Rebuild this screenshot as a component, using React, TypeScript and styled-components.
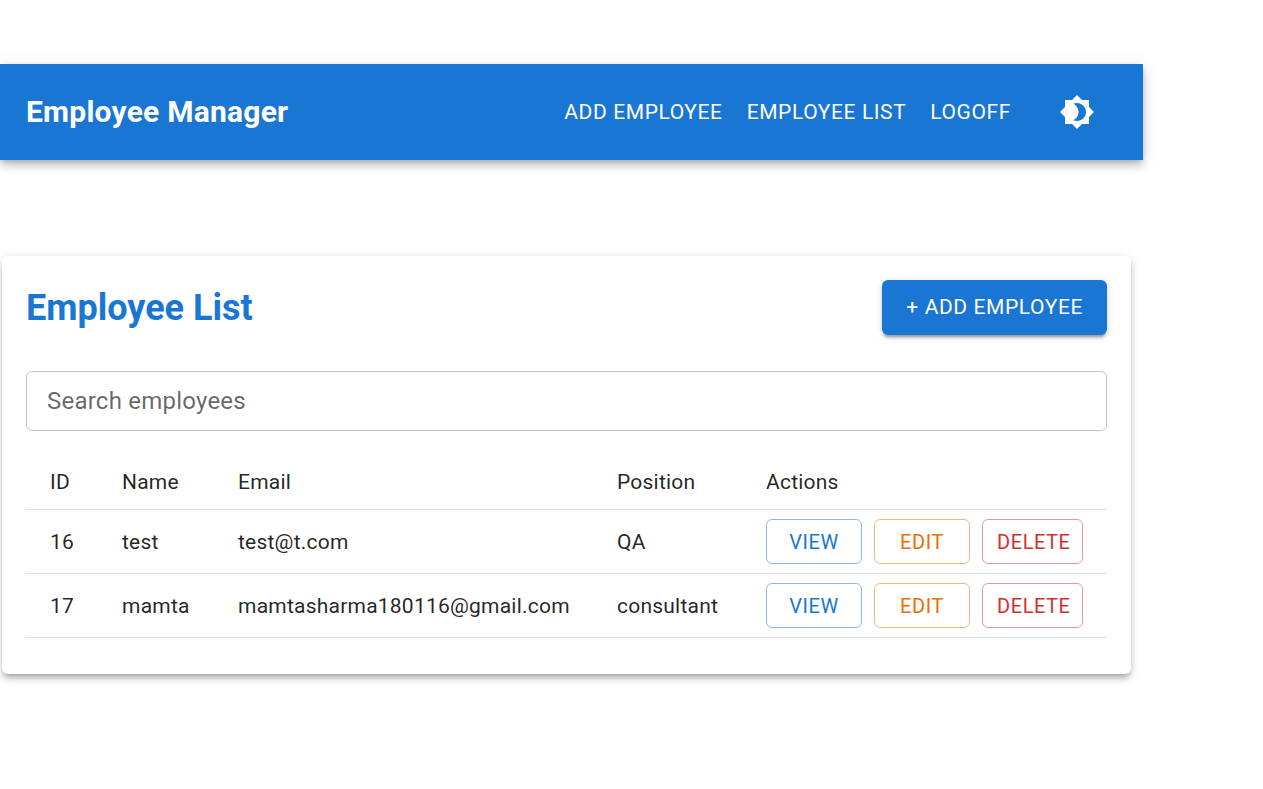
import React, { useState } from "react";
import styled, { createGlobalStyle } from "styled-components";

const GlobalStyle = createGlobalStyle`
  *, *::before, *::after {
    box-sizing: border-box;
  }
  body {
    margin: 0;
    background: #ffffff;
    color: rgba(0, 0, 0, 0.87);
    font-family: Roboto, "Liberation Sans", sans-serif;
    font-size: 21px;
    line-height: 32px;
  }
  button, input {
    font-family: inherit;
  }
`;

const Page = styled.div`
  padding: 64px 120px 64px 0;
`;

const AppBar = styled.header`
  display: flex;
  align-items: center;
  min-height: 96px;
  padding: 0 36px 0 26px;
  background: #1976d2;
  color: #ffffff;
  box-shadow: 0 3px 6px -2px rgba(0, 0, 0, 0.2), 0 6px 8px 0 rgba(0, 0, 0, 0.14),
    0 2px 15px 0 rgba(0, 0, 0, 0.12);
`;

const Brand = styled.div`
  flex: 1;
  font-size: 30px;
  font-weight: 700;
  line-height: 48px;
  letter-spacing: 0.0075em;
`;

const Nav = styled.nav`
  display: flex;
  margin-right: 24px;
`;

const NavLink = styled.a`
  padding: 9px 12px;
  color: inherit;
  font-size: 21px;
  line-height: 37px;
  letter-spacing: 0.02857em;
  text-decoration: none;
  text-transform: uppercase;
`;

const IconButton = styled.button`
  display: flex;
  padding: 12px;
  border: 0;
  border-radius: 50%;
  background: transparent;
  color: inherit;
  cursor: pointer;
`;

const Card = styled.main`
  margin: 96px 12px 0 2px;
  padding: 24px 24px 36px;
  border-radius: 6px;
  background: #ffffff;
  box-shadow: 0 5px 5px -3px rgba(0, 0, 0, 0.2), 0 5px 6px 0 rgba(0, 0, 0, 0.14),
    0 2px 12px 0 rgba(0, 0, 0, 0.12);
`;

const CardHeader = styled.div`
  display: flex;
  align-items: center;
  justify-content: space-between;
  margin-bottom: 36px;
`;

const Title = styled.h1`
  margin: 0;
  color: #1976d2;
  font-size: 36px;
  font-weight: 700;
  line-height: 48px;
`;

const PrimaryButton = styled.button`
  padding: 9px 24px;
  border: 0;
  border-radius: 6px;
  background: #1976d2;
  color: #ffffff;
  font-size: 21px;
  line-height: 37px;
  letter-spacing: 0.02857em;
  text-transform: uppercase;
  cursor: pointer;
  box-shadow: 0 5px 2px -3px rgba(0, 0, 0, 0.2), 0 3px 3px 0 rgba(0, 0, 0, 0.14),
    0 2px 8px 0 rgba(0, 0, 0, 0.12);
`;

const SearchField = styled.input`
  display: block;
  width: 100%;
  height: 60px;
  margin-bottom: 24px;
  padding: 0 20px;
  border: 1px solid rgba(0, 0, 0, 0.23);
  border-radius: 6px;
  background: transparent;
  color: rgba(0, 0, 0, 0.87);
  font-size: 24px;
  letter-spacing: 0.00938em;

  &::placeholder {
    color: rgba(0, 0, 0, 0.6);
    opacity: 1;
  }
`;

const Table = styled.table`
  width: 100%;
  border-collapse: collapse;
  table-layout: fixed;
`;

const Col = styled.col<{ $width?: number }>`
  width: ${({ $width }) => ($width ? `${$width}px` : "auto")};
`;

const HeadCell = styled.th`
  padding: 9px 24px;
  border-bottom: 1px solid #e0e0e0;
  font-weight: 400;
  line-height: 36px;
  letter-spacing: 0.01071em;
  text-align: left;
`;

const Cell = styled.td`
  padding: 9px 24px;
  border-bottom: 1px solid #e0e0e0;
  letter-spacing: 0.01071em;
`;

const Actions = styled.div`
  display: flex;
  gap: 12px;
`;

const tones = {
  view: { text: "#1976d2", border: "rgba(25, 118, 210, 0.5)" },
  edit: { text: "#ed6c02", border: "rgba(237, 108, 2, 0.5)" },
  remove: { text: "#d32f2f", border: "rgba(211, 47, 47, 0.5)" },
};

const ActionButton = styled.button<{ $tone: keyof typeof tones }>`
  min-width: 96px;
  height: 45px;
  padding: 0 14px;
  border: 1px solid ${({ $tone }) => tones[$tone].border};
  border-radius: 6px;
  background: transparent;
  color: ${({ $tone }) => tones[$tone].text};
  font-size: 20px;
  letter-spacing: 0.02857em;
  text-transform: uppercase;
  cursor: pointer;
`;

const employees = [
  { id: 16, name: "test", email: "test@t.com", position: "QA" },
  { id: 17, name: "mamta", email: "mamtasharma180116@gmail.com", position: "consultant" },
];

function BrightnessIcon() {
  return (
    <svg width="36" height="36" viewBox="0 0 24 24" fill="currentColor" aria-hidden="true">
      <path d="M20 8.69V4h-4.69L12 .69 8.69 4H4v4.69L.69 12 4 15.31V20h4.69L12 23.31 15.31 20H20v-4.69L23.31 12 20 8.69zM12 18c-.89 0-1.74-.2-2.5-.55C11.56 16.5 13 14.42 13 12s-1.44-4.5-3.5-5.45C10.26 6.2 11.11 6 12 6c3.31 0 6 2.69 6 6s-2.69 6-6 6z" />
    </svg>
  );
}

export default function App() {
  const [query, setQuery] = useState("");
  const term = query.toLowerCase();
  const visible = employees.filter((e) =>
    `${e.name} ${e.email} ${e.position}`.toLowerCase().includes(term)
  );

  return (
    <>
      <GlobalStyle />
      <Page>
        <AppBar>
          <Brand>Employee Manager</Brand>
          <Nav>
            <NavLink href="#add">Add Employee</NavLink>
            <NavLink href="#list">Employee List</NavLink>
            <NavLink href="#logoff">Logoff</NavLink>
          </Nav>
          <IconButton type="button" aria-label="Toggle theme">
            <BrightnessIcon />
          </IconButton>
        </AppBar>
        <Card>
          <CardHeader>
            <Title>Employee List</Title>
            <PrimaryButton type="button">+ Add Employee</PrimaryButton>
          </CardHeader>
          <SearchField
            type="text"
            aria-label="Search employees"
            placeholder="Search employees"
            value={query}
            onChange={(e) => setQuery(e.target.value)}
          />
          <Table>
            <colgroup>
              <Col $width={72} />
              <Col $width={116} />
              <Col />
              <Col $width={149} />
              <Col $width={365} />
            </colgroup>
            <thead>
              <tr>
                <HeadCell scope="col">ID</HeadCell>
                <HeadCell scope="col">Name</HeadCell>
                <HeadCell scope="col">Email</HeadCell>
                <HeadCell scope="col">Position</HeadCell>
                <HeadCell scope="col">Actions</HeadCell>
              </tr>
            </thead>
            <tbody>
              {visible.map((e) => (
                <tr key={e.id}>
                  <Cell>{e.id}</Cell>
                  <Cell>{e.name}</Cell>
                  <Cell>{e.email}</Cell>
                  <Cell>{e.position}</Cell>
                  <Cell>
                    <Actions>
                      <ActionButton type="button" $tone="view">View</ActionButton>
                      <ActionButton type="button" $tone="edit">Edit</ActionButton>
                      <ActionButton type="button" $tone="remove">Delete</ActionButton>
                    </Actions>
                  </Cell>
                </tr>
              ))}
            </tbody>
          </Table>
        </Card>
      </Page>
    </>
  );
}
